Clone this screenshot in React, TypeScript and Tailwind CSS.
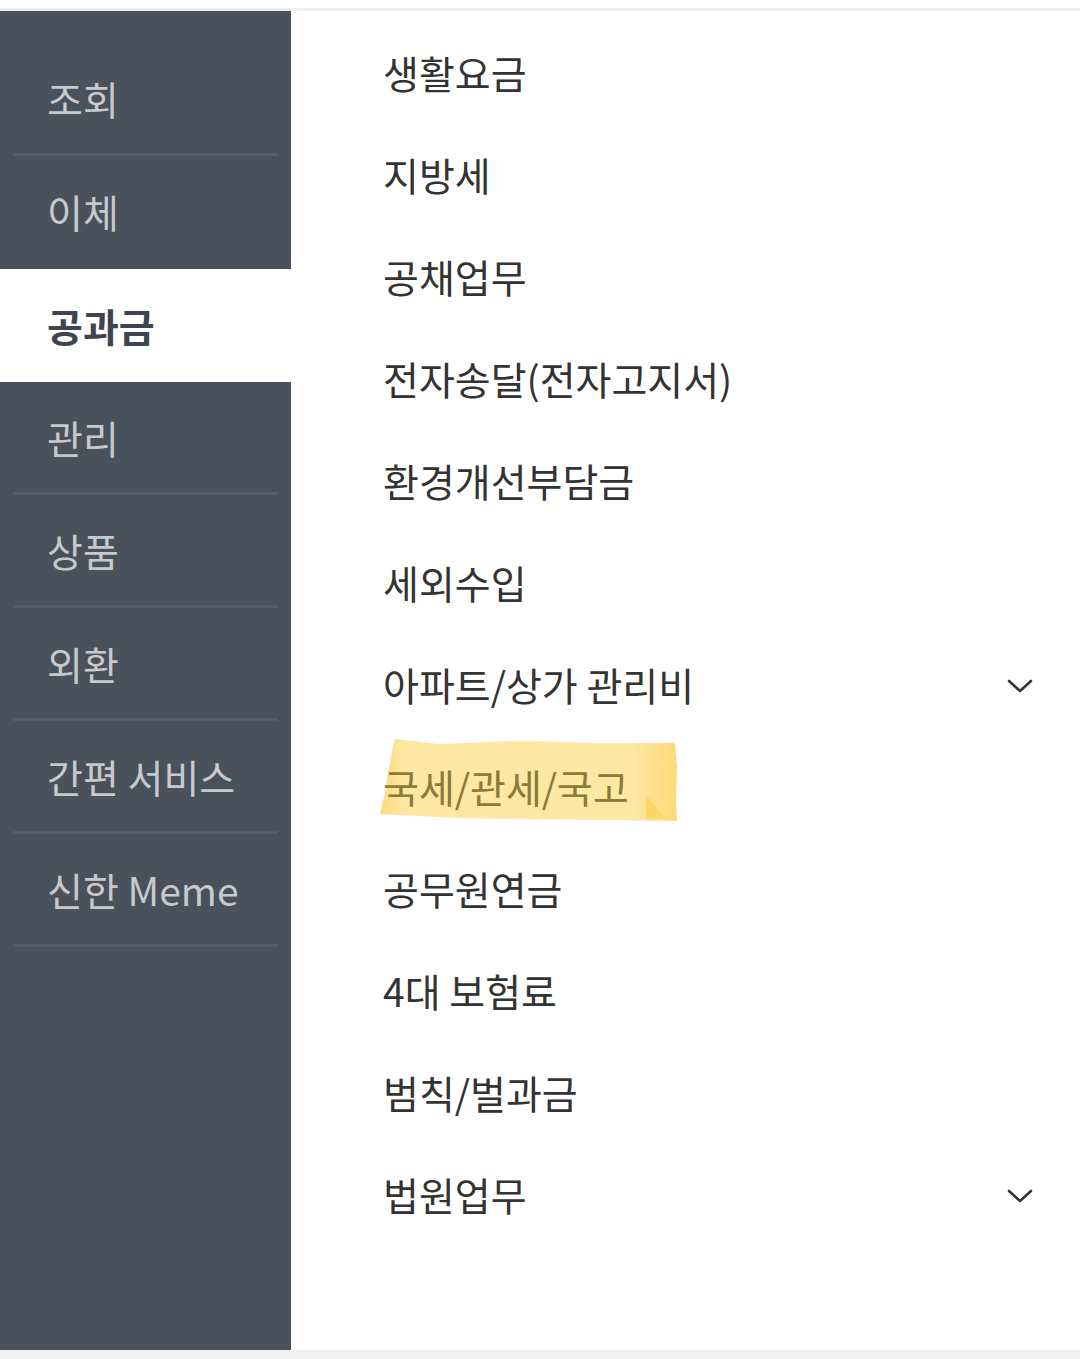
import React from "react";

const sideItems = ["조회", "이체", "공과금", "관리", "상품", "외환", "간편 서비스", "신한 Meme"];
const activeIndex = 2;

const menuItems: {label: string; expandable?: boolean; marked?: boolean}[] = [
    {label: "생활요금"},
    {label: "지방세"},
    {label: "공채업무"},
    {label: "전자송달(전자고지서)"},
    {label: "환경개선부담금"},
    {label: "세외수입"},
    {label: "아파트/상가 관리비", expandable: true},
    {label: "국세/관세/국고", marked: true},
    {label: "공무원연금"},
    {label: "4대 보험료"},
    {label: "범칙/벌과금"},
    {label: "법원업무", expandable: true},
];

export default function App() {
    return (
        <div className="w-[1080px] h-[1359px] bg-white flex flex-col pt-[8px] overflow-hidden"
             style={{fontFamily: '"Noto Sans CJK KR", "Noto Sans", sans-serif'}}>
            <div className="h-[3px] bg-[#eeeff1]"/>
            <div className="flex flex-1 min-h-0">
                <SideBar/>
                <MenuList/>
            </div>
            <div className="h-[9px] bg-[#f0f0f0]"/>
        </div>
    );
}

function SideBar() {
    return (
        <nav className="w-[291px] shrink-0 bg-[#48515c] pt-[32px]">
            {sideItems.map((label, i) => {
                const active = i === activeIndex;
                const hideDivider = i === activeIndex - 1;
                if (active) {
                    return (
                        <div key={label}
                             className="h-[113px] bg-white flex items-center pl-[47px] text-[39px] font-bold text-[#3e4550]">
                            {label}
                        </div>
                    );
                }
                return (
                    <div key={label}>
                        <div className="h-[110px] flex items-center pl-[47px] text-[39px] text-[#c6c9ce]">
                            {label}
                        </div>
                        <div className={`h-[3px] mx-[13px] ${hideDivider ? "bg-transparent" : "bg-[#535c68]"}`}/>
                    </div>
                );
            })}
        </nav>
    );
}

function MenuList() {
    return (
        <ul className="flex-1 pt-[10px]">
            {menuItems.map(item => (
                <li key={item.label} className="relative h-[102px] flex items-center pl-[92px] pr-[47px]">
                    {item.marked && <TapeMark/>}
                    <span className={`relative text-[39px] ${item.marked ? "text-[#8c7a38]" : "text-[#333333]"}`}>
                        {item.label}
                    </span>
                    {item.expandable && (
                        <svg className="ml-auto mt-[4px] w-[26px] h-[14px]" viewBox="0 0 26 14" fill="none">
                            <path d="M2 2l11 10L24 2" stroke="#333" strokeWidth="2.6" strokeLinecap="round"
                                  strokeLinejoin="round"/>
                        </svg>
                    )}
                </li>
            ))}
        </ul>
    );
}

function TapeMark() {
    return (
        <svg className="absolute left-[87px] top-[4px] w-[300px] h-[85px]" viewBox="0 0 300 85">
            <defs>
                <linearGradient id="tape" x1="0" y1="0" x2="1" y2="0">
                    <stop offset="0" stopColor="#fdda7e"/>
                    <stop offset="0.08" stopColor="#fee7a2"/>
                    <stop offset="0.85" stopColor="#fee8a4"/>
                    <stop offset="1" stopColor="#fdd977"/>
                </linearGradient>
            </defs>
            <path
                d="M17 0 L60 5 L140 2 L220 4 L297 4 L299 30 L298 60 L299 82 L230 81 L150 80 L80 79 L2 75 L5 62 L8 50 L9 38 L12 25 L14 12 Z"
                fill="url(#tape)"/>
            <path d="M268 56 L287 79 L268 80 Z" fill="#fdd765"/>
        </svg>
    );
}
